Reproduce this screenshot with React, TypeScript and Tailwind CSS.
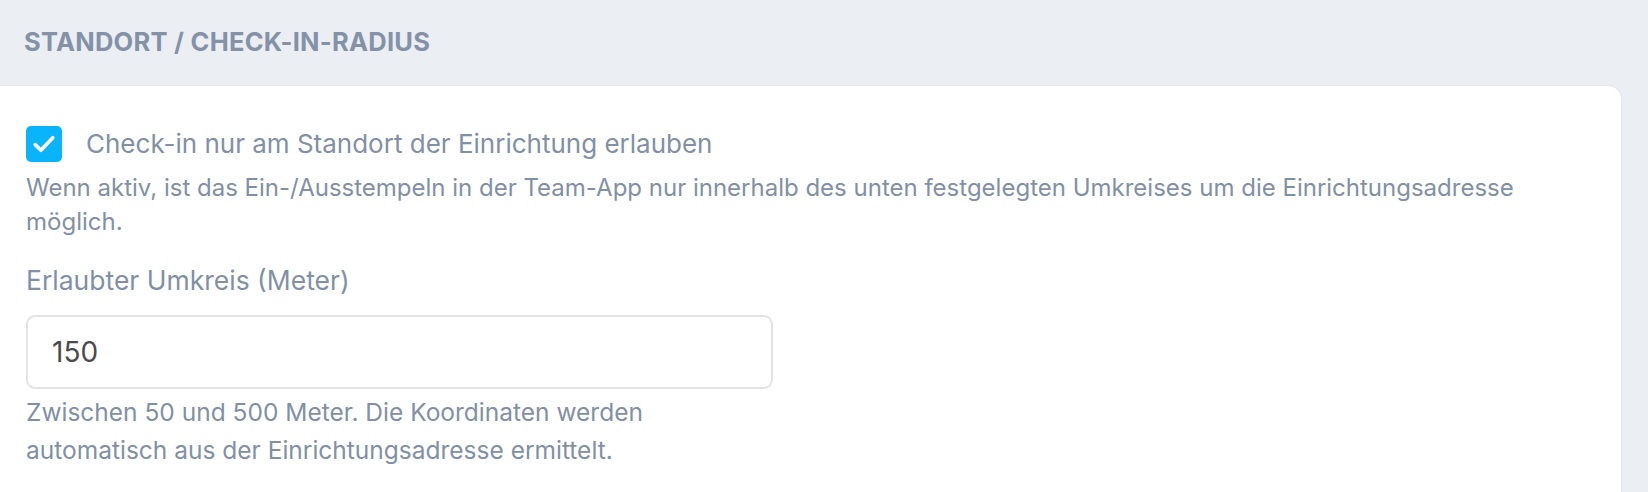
import React from 'react';

const font = { fontFamily: 'Inter, "Noto Sans", sans-serif' };

export default function App() {
  return (
    <div className="min-h-[492px] flex flex-col bg-[#ebeef3] text-[#8190a6]" style={font}>
      <div className="h-[85px] flex items-center pl-[24px]">
        <h2 className="text-[25.5px] font-bold uppercase tracking-[0.01em] text-[#8492a8]">
          Standort / Check-in-Radius
        </h2>
      </div>

      <div className="flex-1 mr-[26px] bg-white border border-l-0 border-b-0 border-[#e3e6eb] rounded-tr-[14px] pt-[40px] px-[26px] pb-[40px]">
        <label className="flex items-center gap-[24px]">
          <span className="w-[36px] h-[36px] rounded-[5px] bg-[#0ab4fb] flex items-center justify-center shrink-0">
            <svg width="30" height="30" viewBox="0 0 24 24" fill="none" stroke="white" strokeWidth="2.9" strokeLinecap="round" strokeLinejoin="round">
              <path d="M5 12.5l4.5 4.5L19 7" />
            </svg>
          </span>
          <span className="text-[26px] leading-[36px]">Check-in nur am Standort der Einrichtung erlauben</span>
        </label>

        <p className="mt-[9px] text-[24px] leading-[34px]">
          Wenn aktiv, ist das Ein-/Ausstempeln in der Team-App nur innerhalb des unten festgelegten Umkreises um die Einrichtungsadresse möglich.
        </p>

        <div className="mt-[24px] text-[26.5px] leading-[34px]">Erlaubter Umkreis (Meter)</div>

        <div className="w-[747px]">
          <input
            type="text"
            defaultValue="150"
            className="mt-[18px] w-full h-[74px] rounded-[9px] border-2 border-[#e4e4e4] px-[24px] text-[28px] text-[#4b4b4b] outline-none"
          />
          <p className="mt-[4px] text-[24.5px] leading-[38px]">
            Zwischen 50 und 500 Meter. Die Koordinaten werden automatisch aus der Einrichtungsadresse ermittelt.
          </p>
        </div>
      </div>
    </div>
  );
}
